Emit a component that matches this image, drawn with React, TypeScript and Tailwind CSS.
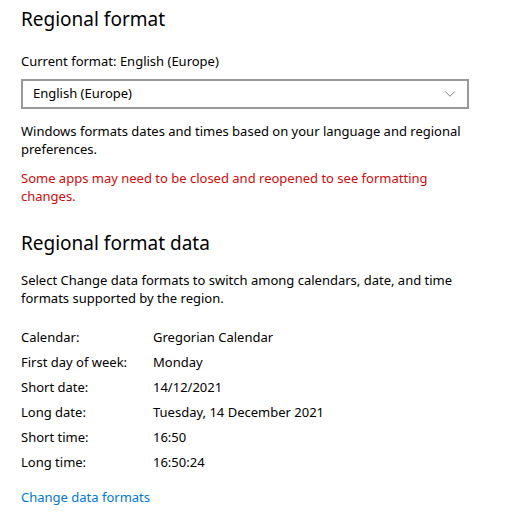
import { ChevronDown } from "lucide-react";

// Rows of the regional format data table
const formatRows: [string, string][] = [
  ["Calendar:", "Gregorian Calendar"],
  ["First day of week:", "Monday"],
  ["Short date:", "14/12/2021"],
  ["Long date:", "Tuesday, 14 December 2021"],
  ["Short time:", "16:50"],
  ["Long time:", "16:50:24"],
];

function App() {
  return (
    <div
      className="w-[526px] h-[516px] bg-white text-[#000] px-[21px] pt-[5px] overflow-hidden"
      style={{ fontFamily: '"Segoe UI", "Noto Sans", "Open Sans", sans-serif' }}
    >
      <h1 className="text-[19px] leading-[28px] font-normal">Regional format</h1>

      <p className="mt-[18px] text-[13px] leading-[20px]">
        Current format: English (Europe)
      </p>

      <button className="mt-[8px] flex items-center justify-between w-[448px] h-[30px] border-2 border-[#999999] pl-[10px] pr-[8px] text-[13px] text-left">
        <span>English (Europe)</span>
        <ChevronDown className="w-[18px] h-[18px] stroke-[#555]" strokeWidth={1} />
      </button>

      <p className="mt-[13px] text-[13px] leading-[18px] w-[470px]">
        Windows formats dates and times based on your language and regional
        preferences.
      </p>

      <p className="mt-[11px] text-[13px] leading-[18px] text-[#d10a0a] w-[440px]">
        Some apps may need to be closed and reopened to see formatting changes.
      </p>

      <h2 className="mt-[24px] text-[19px] leading-[28px] font-normal">
        Regional format data
      </h2>

      <p className="mt-[14px] text-[13px] leading-[18px] w-[460px]">
        Select Change data formats to switch among calendars, date, and time
        formats supported by the region.
      </p>

      <div className="mt-[18px] flex flex-col text-[13px]">
        {formatRows.map(([label, value]) => (
          <div key={label} className="flex h-[25px] items-center">
            <span className="w-[132px]">{label}</span>
            <span>{value}</span>
          </div>
        ))}
      </div>

      <a href="#" className="block mt-[13px] text-[13px] leading-[18px] text-[#0078d7]">
        Change data formats
      </a>
    </div>
  );
}

export default App;
